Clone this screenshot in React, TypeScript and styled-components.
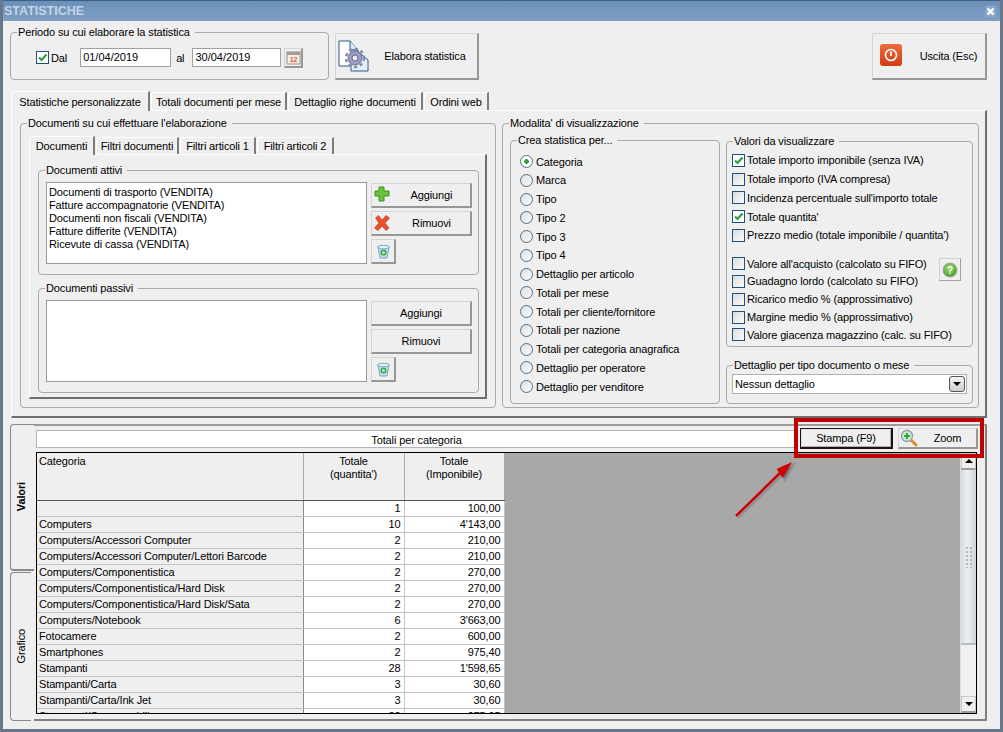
import React from "react";
import styled, { createGlobalStyle } from "styled-components";

const Global = createGlobalStyle`
  html, body { margin: 0; padding: 0; background: #efefef; }
  body { font-family: "Liberation Sans", Arial, sans-serif; font-size: 11px; letter-spacing: -0.13px; color: #000; }
  * { box-sizing: border-box; }
`;

const Win = styled.div`
  position: relative;
  width: 1003px; height: 732px; overflow: hidden;
  background: #efefef;
  border-left: 3px solid #66788c; border-right: 3px solid #66788c; border-bottom: 3px solid #66788c;
  display: flex; flex-direction: column;
`;
const TitleBar = styled.div`
  height: 21px; flex: none; margin: 0 -3px; padding: 0 7px 0 4px;
  border-top: 1px solid #3d5f86;
  background: linear-gradient(#6a90b8, #7f9fc3);
  display: flex; align-items: center; justify-content: space-between;
  color: #c4d4e6; font: bold 12.5px "Liberation Sans", Arial, sans-serif; letter-spacing: 0;
`;
const CloseBox = styled.div`
  width: 11px; height: 11px; display: flex; background: #8aa7c8;
`;
const TopRow = styled.div`
  display: flex; margin: 5px 0 0 7px; width: 977px; height: 54px; flex: none;
`;
const Group = styled.fieldset<{ $w: number; $h: number }>`
  margin: 0; padding: 0; min-width: 0; flex: none;
  width: ${p => p.$w}px; height: ${p => p.$h}px;
  border: 1px solid #a9a9a9; border-radius: 4px;
  position: relative;
`;
const Legend = styled.legend`
  margin-left: 6px; padding: 0 5px 0 1px; font-size: 11px; line-height: 13px; white-space: nowrap;
`;
const PeriodRow = styled.div`
  display: flex; align-items: center; height: 19px; margin: 9px 0 0 25px;
`;
const Check = styled.span<{ $on?: boolean }>`
  width: 13px; height: 13px; flex: none; display: inline-flex;
  border: 1px solid #1c5180;
  background: ${p => p.$on ? "#fff" : "linear-gradient(135deg,#dcdcdc,#fbfbfb)"};
`;
const Line = styled.label`
  display: flex; align-items: center; gap: 2px; white-space: nowrap; height: 13px;
`;
const DateInput = styled.div<{ $w: number; $ml: number }>`
  width: ${p => p.$w}px; margin-left: ${p => p.$ml}px; height: 19px; flex: none;
  background: #fff; border: 1px solid #a0a0a0; padding-left: 2px; line-height: 17px; font-size: 11px; letter-spacing: 0;
`;
const PlainLabel = styled.span<{ $ml: number }>`
  margin-left: ${p => p.$ml}px;
`;
const Btn = styled.div<{ $w: number; $h: number; $ml?: number; $mt?: number; $icon?: boolean }>`
  width: ${p => p.$w}px; height: ${p => p.$h}px; flex: none;
  margin-left: ${p => p.$ml ?? 0}px; margin-top: ${p => p.$mt ?? 0}px;
  background: #efefef;
  border: 1px solid #d4d4d4; border-right: 2px solid #979797; border-bottom: 2px solid #979797;
  display: flex; align-items: center; justify-content: center; position: relative;
  font-size: 11px; white-space: nowrap;
`;
const BtnIcon = styled.span<{ $x: number; $y: number }>`
  position: absolute; left: ${p => p.$x}px; top: ${p => p.$y}px; display: flex;
`;
const BtnText = styled.span<{ $pl?: number }>`
  padding-left: ${p => p.$pl ?? 0}px;
`;
const Spacer = styled.div`flex: 1;`;

const TabStrip = styled.div<{ $ml: number; $h: number }>`
  display: flex; align-items: flex-end; margin-left: ${p => p.$ml}px; height: ${p => p.$h}px; flex: none;
`;
const Tab = styled.div<{ $w: number; $on?: boolean }>`
  width: ${p => p.$w}px; height: ${p => p.$on ? "100%" : "calc(100% - 2px)"}; flex: none;
  margin-right: 1px;
  background: #efefef;
  border-top: 1px solid #fff; border-left: 1px solid #fff;
  border-right: 2px solid #7d7d7d; border-radius: 3px 0 0 0;
  display: flex; align-items: center; justify-content: center;
  white-space: nowrap; font-size: 11px;
  ${p => p.$on ? "margin-bottom:-1px; position:relative; z-index:1;" : ""}
`;
const MainPanel = styled.div`
  margin: 0 0 0 8px; width: 976px; height: 308px; flex: none;
  border-top: 1px solid #fff; border-left: 1px solid #fff;
  border-right: 2px solid #6e6e6e; border-bottom: 2px solid #6e6e6e;
  display: flex; padding: 6px 0 0 8px; gap: 6px;
`;
const TabBlock = styled.div`
  margin-top: 10px; flex: none;
`;
const InnerTabsWrap = styled.div`
  margin: 5px 0 0 8px;
`;
const InnerPanel = styled.div`
  width: 458px; height: 245px;
  border-top: 1px solid #fff; border-left: 1px solid #fff;
  border-right: 2px solid #6e6e6e; border-bottom: 2px solid #6e6e6e;
  padding: 9px 0 0 8px; display: flex; flex-direction: column; gap: 7px;
`;
const DocRow = styled.div`
  display: flex; margin: 5px 0 0 7px; gap: 4px;
`;
const ListBox = styled.div`
  width: 321px; height: 82px; background: #fff; border: 1px solid #9a9a9a; padding: 3px 0 0 2px;
  font-size: 11px; line-height: 13px;
`;
const BtnCol = styled.div`
  display: flex; flex-direction: column; gap: 3px; padding-top: 1px;
`;
const ModeRow = styled.div`
  display: flex; gap: 6px; margin: 4px 0 0 7px; align-items: flex-start;
`;
const RadioList = styled.div`
  height: 238px; margin: 8px 0 0 9px; display: flex; flex-direction: column; justify-content: space-between;
`;
const RadioCircle = styled.span<{ $on?: boolean }>`
  width: 13px; height: 13px; border-radius: 50%; flex: none; border: 1px solid #4a6f8f;
  background: ${p => p.$on ? "radial-gradient(circle,#2f9e3a 0 2px,#fff 2.6px)" : "linear-gradient(135deg,#dcdfe2,#fafafa)"};
`;
const RadioLine = styled(Line)`gap: 3px;`;
const RightCol = styled.div`
  display: flex; flex-direction: column; gap: 12px; padding-top: 1px;
`;
const CheckCol = styled.div`
  display: flex; flex-direction: column; margin: 3px 0 0 5px; position: relative;
`;
const CheckLine = styled(Line)<{ $mt?: number; $h: number }>`
  height: ${p => p.$h}px; margin-top: ${p => p.$mt ?? 0}px;
`;
const HelpBtn = styled.div`
  position: absolute; left: 207px; top: 107px; width: 22px; height: 23px;
  background: #efefef; border: 1px solid #d0d0d0; border-right: 1px solid #a0a0a0; border-bottom: 1px solid #a0a0a0;
  display: flex; align-items: center; justify-content: center;
`;
const Select = styled.div`
  margin: 2px 0 0 5px; width: 235px; height: 20px; background: #fff; border: 1px solid #b0b0b0;
  display: flex; align-items: center; justify-content: space-between; padding: 0 1px 0 2px;
`;
const SelectBtn = styled.span`
  width: 16px; height: 16px; border: 1px solid #555; border-radius: 3px;
  background: linear-gradient(#f4f4f4,#cfcfcf); display: flex; align-items: center; justify-content: center;
`;
const Arrow = styled.span<{ $up?: boolean }>`
  width: 0; height: 0; border-left: 4px solid transparent; border-right: 4px solid transparent;
  ${p => p.$up ? "border-bottom: 4px solid #000;" : "border-top: 4px solid #000;"}
`;

const BottomArea = styled.div`
  margin: 6px 0 0 7px; width: 977px; height: 297px; display: flex; flex: none;
`;
const SideTabs = styled.div`
  width: 24px; flex: none; display: flex; flex-direction: column;
`;
const SideTab = styled.div<{ $on?: boolean; $h: number }>`
  height: ${p => p.$h}px; flex: none; width: ${p => p.$on ? "24px" : "21px"};
  border: 1px solid #8a8a8a; border-right: none; border-radius: 4px 0 0 4px;
  background: #efefef;
  display: flex; align-items: center; justify-content: center;
  ${p => p.$on ? "border-bottom-width:2px; font-weight:bold; position:relative; z-index:1; margin-right:-1px; margin-bottom:1px; padding-right:3px;" : ""}
`;
const SideLabel = styled.span`
  writing-mode: vertical-rl; transform: rotate(180deg); font-size: 11px; white-space: nowrap;
`;
const ContentPanel = styled.div`
  width: 953px; height: 297px; flex: none;
  border-top: 2px solid #9a9a9a; border-right: 2px solid #808080; border-bottom: 2px solid #808080;
  padding: 4px 0 0 2px; display: flex; flex-direction: column; gap: 4px;
`;
const CatTitle = styled.div`
  height: 18px; width: 761px; flex: none; background: #fff;
  border: 1px solid #b5b5b5; display: flex; align-items: center; justify-content: center;
  padding-top: 1px;
`;
const GridFrame = styled.div`
  width: 941px; height: 262px; flex: none; border: 1px solid #000; background: #a8a8a8;
  display: flex; overflow: hidden;
`;
const GridCols = styled.div`
  flex: 1; overflow: hidden;
`;
const Tbl = styled.table`
  border-collapse: collapse; table-layout: fixed; width: 467px; font-size: 11px;
`;
const HeadCell = styled.th<{ $w: number; $left?: boolean }>`
  width: ${p => p.$w}px; height: 47px; padding: 2px 3px 0 ${p => p.$left ? "2px" : "3px"};
  vertical-align: top; background: #efefef; font-weight: normal; line-height: 13px;
  text-align: ${p => p.$left ? "left" : "center"};
  border-right: 1px solid #aab; border-bottom: 1px solid #555;
`;
const CatCell = styled.td`
  height: 16px; padding: 0 2px; background: #efefef; white-space: nowrap; line-height: 15px;
  border-right: 1px solid #888; border-bottom: 1px solid #c4c4c4; overflow: hidden;
`;
const NumCell = styled.td`
  height: 16px; padding: 0 3px 0 0; background: #fff; text-align: right; line-height: 15px;
  border-right: 1px solid #c4c4c4; border-bottom: 1px solid #c4c4c4;
`;
const ScrollBar = styled.div`
  width: 16px; flex: none; background: #f0f0f0; display: flex; flex-direction: column;
  border-left: 1px solid #ddd;
`;
const ScrollBtn = styled.div<{ $h: number }>`
  height: ${p => p.$h}px; flex: none; background: #efefef; border: 1px solid #c8c8c8; border-bottom: 2px solid #9b9b9b;
  display: flex; align-items: center; justify-content: center;
`;
const Thumb = styled.div`
  height: 175px; flex: none; border-bottom: 2px solid #b8bcc4;
  background: linear-gradient(90deg,#d8dae0,#eceef2 40%,#d0d3da);
  display: flex; align-items: center; justify-content: center;
`;
const Grip = styled.div`
  width: 7px; height: 22px;
  background-image: radial-gradient(#b4b7be 0.8px, transparent 1px);
  background-size: 4px 4px;
`;
const Track = styled.div`flex: 1;`;

const Callout = styled.div`
  position: absolute; left: 791px; top: 418px; width: 190px; height: 40px;
  border: 4px solid #c00000; z-index: 5;
  display: flex; padding: 6px 0 0 2px; gap: 5px;
`;
const PrintBtn = styled.div`
  width: 93px; height: 21px; border: 1px solid #201010; border-bottom-width: 2px; border-right-width: 2px;
  background: #efefef; display: flex; align-items: center; justify-content: center; box-shadow: inset 1px 1px 0 #e0e0e0, inset -1px -1px 0 #b0b0b0;
`;
const ArrowSvg = styled.svg`
  position: absolute; left: 722px; top: 460px; z-index: 6; overflow: visible;
`;

const CheckMark = () => (
  <svg width="11" height="11" viewBox="0 0 11 11"><path d="M2 5.5 L4.5 8 L9.5 2.5" fill="none" stroke="#2f9e3a" strokeWidth="2.2" /></svg>
);
const GearDocIcon = () => (
  <svg width="32" height="32" viewBox="0 0 32 32">
    <path d="M1 1 H12 L20 10 V26 H1Z" fill="#fff" stroke="#2b5c8a" />
    <path d="M12 1 V10 H20" fill="#dbe9f6" stroke="#2b5c8a" />
    <path d="M13 10 H18 L30 20 V31 H13Z" fill="#e4eef8" stroke="#2b5c8a" />
    <circle cx="17" cy="18" r="7" fill="#9c9cc0" stroke="#73739a" strokeWidth="1" />
    <circle cx="17" cy="18" r="9" fill="none" stroke="#8a8ab0" strokeWidth="2.5" strokeDasharray="3 3" />
    <circle cx="17" cy="18" r="3" fill="#e8e8f2" stroke="#6c6c92" />
  </svg>
);
const CalIcon = () => (
  <svg width="15" height="15" viewBox="0 0 15 15">
    <rect x="1" y="2" width="13" height="12" fill="#f6f0ea" stroke="#9a8f8a" />
    <rect x="1" y="2" width="13" height="3" fill="#a89a94" />
    <text x="7.5" y="12" textAnchor="middle" fontSize="7" fontWeight="bold" fill="#e8582a" fontFamily="Liberation Sans">12</text>
  </svg>
);
const PowerIcon = () => (
  <svg width="22" height="22" viewBox="0 0 22 22">
    <defs><linearGradient id="pw" x1="0" y1="0" x2="0" y2="1"><stop offset="0" stopColor="#f06a40" /><stop offset="1" stopColor="#d23a12" /></linearGradient></defs>
    <rect x="0" y="0" width="22" height="22" rx="3" fill="url(#pw)" />
    <circle cx="11" cy="11" r="5.5" fill="none" stroke="#fff" strokeWidth="1.6" />
    <path d="M11 7.5 V12" stroke="#fff" strokeWidth="1.8" />
  </svg>
);
const PlusIcon = () => (
  <svg width="16" height="16" viewBox="0 0 16 16"><path d="M5 1 H10 V5 H15 V10 H10 V15 H5 V10 H1 V5 H5Z" fill="#6cc23f" stroke="#3d8f22" /></svg>
);
const XIcon = () => (
  <svg width="16" height="16" viewBox="0 0 16 16"><path d="M1.5 3 L4.5 0.5 L8 5 L12 0.5 L15.5 3 L11 8 L15 13 L12 15.5 L8 11 L4 15.5 L0.5 13 L5 8Z" fill="#e8502c" stroke="#c83c1c" strokeWidth="0.7" /></svg>
);
const BinIcon = () => (
  <svg width="15" height="15" viewBox="0 0 15 15">
    <path d="M2 3 L4 14 H11 L13 3Z" fill="#bfe0f2" stroke="#7aa8c4" />
    <ellipse cx="7.5" cy="3" rx="6" ry="1.7" fill="#e6f2f9" stroke="#7aa8c4" />
    <circle cx="7.5" cy="8.5" r="2.3" fill="none" stroke="#3aa83a" strokeWidth="1.5" />
  </svg>
);
const HelpIcon = () => (
  <svg width="16" height="16" viewBox="0 0 16 16">
    <defs><radialGradient id="hp" cx="0.45" cy="0.35" r="0.7"><stop offset="0" stopColor="#9fdc6a" /><stop offset="1" stopColor="#3f9a28" /></radialGradient></defs>
    <circle cx="8" cy="8" r="7" fill="url(#hp)" stroke="#9aa89a" />
    <text x="8" y="11.5" textAnchor="middle" fontSize="10" fontWeight="bold" fill="#fff" fontFamily="Liberation Sans">?</text>
  </svg>
);
const ZoomIcon = () => (
  <svg width="18" height="18" viewBox="0 0 18 18">
    <path d="M10 10 L16 16" stroke="#e08a30" strokeWidth="3" strokeLinecap="round" />
    <circle cx="7" cy="7" r="5.5" fill="#cfe6d8" stroke="#8ea0a8" strokeWidth="1.4" />
    <path d="M7 4 V10 M4 7 H10" stroke="#2fa82f" strokeWidth="2" />
  </svg>
);
const SmallX = () => (
  <svg width="11" height="11" viewBox="0 0 11 11"><path d="M2.5 2.5 L8.5 8.5 M8.5 2.5 L2.5 8.5" stroke="#fff" strokeWidth="2.4" /></svg>
);

const attivi = ["Documenti di trasporto (VENDITA)", "Fatture accompagnatorie (VENDITA)", "Documenti non fiscali (VENDITA)", "Fatture differite (VENDITA)", "Ricevute di cassa (VENDITA)"];
const radios = ["Categoria", "Marca", "Tipo", "Tipo 2", "Tipo 3", "Tipo 4", "Dettaglio per articolo", "Totali per mese", "Totali per cliente/fornitore", "Totali per nazione", "Totali per categoria anagrafica", "Dettaglio per operatore", "Dettaglio per venditore"];
const checks: [string, boolean, number, number][] = [
  ["Totale importo imponibile (senza IVA)", true, 0, 18.75],
  ["Totale importo (IVA compresa)", false, 0, 18.75],
  ["Incidenza percentuale sull'importo totale", false, 0, 18.75],
  ["Totale quantita'", true, 0, 18.75],
  ["Prezzo medio (totale imponibile / quantita')", false, 0, 18.75],
  ["Valore all'acquisto (calcolato su FIFO)", false, 10, 17.8],
  ["Guadagno lordo (calcolato su FIFO)", false, 0, 17.8],
  ["Ricarico medio % (approssimativo)", false, 0, 17.8],
  ["Margine medio % (approssimativo)", false, 0, 17.8],
  ["Valore giacenza magazzino (calc. su FIFO)", false, 0, 17.8],
];
const rows: [string, string, string][] = [
  ["", "1", "100,00"],
  ["Computers", "10", "4'143,00"],
  ["Computers/Accessori Computer", "2", "210,00"],
  ["Computers/Accessori Computer/Lettori Barcode", "2", "210,00"],
  ["Computers/Componentistica", "2", "270,00"],
  ["Computers/Componentistica/Hard Disk", "2", "270,00"],
  ["Computers/Componentistica/Hard Disk/Sata", "2", "270,00"],
  ["Computers/Notebook", "6", "3'663,00"],
  ["Fotocamere", "2", "600,00"],
  ["Smartphones", "2", "975,40"],
  ["Stampanti", "28", "1'598,65"],
  ["Stampanti/Carta", "3", "30,60"],
  ["Stampanti/Carta/Ink Jet", "3", "30,60"],
  ["Stampanti/Consumabili", "22", "975,05"],
];

const DocGroup = ({ title, items, icons }: { title: string; items: string[]; icons: boolean }) => (
  <Group $w={441} $h={111}>
    <Legend>{title}</Legend>
    <DocRow>
      <ListBox>{items.map(t => <div key={t}>{t}</div>)}</ListBox>
      <BtnCol>
        <Btn $w={101} $h={25}>
          {icons && <BtnIcon $x={2} $y={2}><PlusIcon /></BtnIcon>}
          <BtnText $pl={icons ? 21 : 0}>Aggiungi</BtnText>
        </Btn>
        <Btn $w={101} $h={25}>
          {icons && <BtnIcon $x={2} $y={3}><XIcon /></BtnIcon>}
          <BtnText $pl={icons ? 21 : 0}>Rimuovi</BtnText>
        </Btn>
        <Btn $w={25} $h={25}><BinIcon /></Btn>
      </BtnCol>
    </DocRow>
  </Group>
);

export default function App() {
  return (
    <Win>
      <Global />
      <TitleBar>
        <span>STATISTICHE</span>
        <CloseBox><SmallX /></CloseBox>
      </TitleBar>

      <TopRow>
        <Group $w={319} $h={54}>
          <Legend>Periodo su cui elaborare la statistica</Legend>
          <PeriodRow>
            <Line><Check $on><CheckMark /></Check>Dal</Line>
            <DateInput $w={91} $ml={13}>01/04/2019</DateInput>
            <PlainLabel $ml={5}>al</PlainLabel>
            <DateInput $w={89} $ml={8}>30/04/2019</DateInput>
            <Btn $w={19} $h={20} $ml={3}><CalIcon /></Btn>
          </PeriodRow>
        </Group>
        <Btn $w={144} $h={47} $ml={6} $mt={7}>
          <BtnIcon $x={2} $y={6}><GearDocIcon /></BtnIcon>
          <BtnText $pl={37}>Elabora statistica</BtnText>
        </Btn>
        <Spacer />
        <Btn $w={115} $h={47} $mt={7}>
          <BtnIcon $x={7} $y={10}><PowerIcon /></BtnIcon>
          <BtnText $pl={39}>Uscita (Esc)</BtnText>
        </Btn>
      </TopRow>

      <TabBlock>
        <TabStrip $ml={8} $h={20}>
          <Tab $w={139} $on>Statistiche personalizzate</Tab>
          <Tab $w={136}>Totali documenti per mese</Tab>
          <Tab $w={135}>Dettaglio righe documenti</Tab>
          <Tab $w={65}>Ordini web</Tab>
        </TabStrip>
        <MainPanel>
          <Group $w={476} $h={291}>
            <Legend>Documenti su cui effettuare l'elaborazione</Legend>
            <InnerTabsWrap>
              <TabStrip $ml={0} $h={19}>
                <Tab $w={66} $on>Documenti</Tab>
                <Tab $w={83}>Filtri documenti</Tab>
                <Tab $w={76}>Filtri articoli 1</Tab>
                <Tab $w={77}>Filtri articoli 2</Tab>
              </TabStrip>
              <InnerPanel>
                <DocGroup title="Documenti attivi" items={attivi} icons />
                <DocGroup title="Documenti passivi" items={[]} icons={false} />
              </InnerPanel>
            </InnerTabsWrap>
          </Group>
          <Group $w={477} $h={291}>
            <Legend>Modalita' di visualizzazione</Legend>
            <ModeRow>
              <Group $w={210} $h={270}>
                <Legend>Crea statistica per...</Legend>
                <RadioList>
                  {radios.map((r, i) => (
                    <RadioLine key={r}><RadioCircle $on={i === 0} />{r}</RadioLine>
                  ))}
                </RadioList>
              </Group>
              <RightCol>
                <Group $w={247} $h={212}>
                  <Legend>Valori da visualizzare</Legend>
                  <CheckCol>
                    {checks.map(([t, on, mt, h]) => (
                      <CheckLine key={t} $mt={mt} $h={h}><Check $on={on}>{on && <CheckMark />}</Check>{t}</CheckLine>
                    ))}
                    <HelpBtn><HelpIcon /></HelpBtn>
                  </CheckCol>
                </Group>
                <Group $w={247} $h={45}>
                  <Legend>Dettaglio per tipo documento o mese</Legend>
                  <Select>Nessun dettaglio<SelectBtn><Arrow /></SelectBtn></Select>
                </Group>
              </RightCol>
            </ModeRow>
          </Group>
        </MainPanel>
      </TabBlock>

      <BottomArea>
        <SideTabs>
          <SideTab $on $h={147}><SideLabel>Valori</SideLabel></SideTab>
          <SideTab $h={149}><SideLabel>Grafico</SideLabel></SideTab>
        </SideTabs>
        <ContentPanel>
          <CatTitle>Totali per categoria</CatTitle>
          <GridFrame>
            <GridCols>
              <Tbl>
                <thead>
                  <tr>
                    <HeadCell $w={266} $left>Categoria</HeadCell>
                    <HeadCell $w={101}>Totale<br />(quantita')</HeadCell>
                    <HeadCell $w={100}>Totale<br />(Imponibile)</HeadCell>
                  </tr>
                </thead>
                <tbody>
                  {rows.map(([c, q, v], i) => (
                    <tr key={i}>
                      <CatCell>{c}</CatCell>
                      <NumCell>{q}</NumCell>
                      <NumCell>{v}</NumCell>
                    </tr>
                  ))}
                </tbody>
              </Tbl>
            </GridCols>
            <ScrollBar>
              <ScrollBtn $h={17}><Arrow $up /></ScrollBtn>
              <Thumb><Grip /></Thumb>
              <Track />
              <ScrollBtn $h={17}><Arrow /></ScrollBtn>
            </ScrollBar>
          </GridFrame>
        </ContentPanel>
      </BottomArea>

      <Callout>
        <PrintBtn>Stampa (F9)</PrintBtn>
        <Btn $w={80} $h={21}>
          <BtnIcon $x={1} $y={0}><ZoomIcon /></BtnIcon>
          <BtnText $pl={20}>Zoom</BtnText>
        </Btn>
      </Callout>
      <ArrowSvg width="70" height="70" viewBox="0 0 70 70">
        <path d="M11 56 L55 13 M52 9 L67 2 L58 18 Z" stroke="#555" strokeWidth="2" opacity="0.3" transform="translate(2 2)" />
        <path d="M11 56 L55 13" stroke="#cc0000" strokeWidth="2.5" />
        <path d="M51.7 9 L67 2 L57.7 18 Z" fill="#cc0000" />
      </ArrowSvg>
    </Win>
  );
}
